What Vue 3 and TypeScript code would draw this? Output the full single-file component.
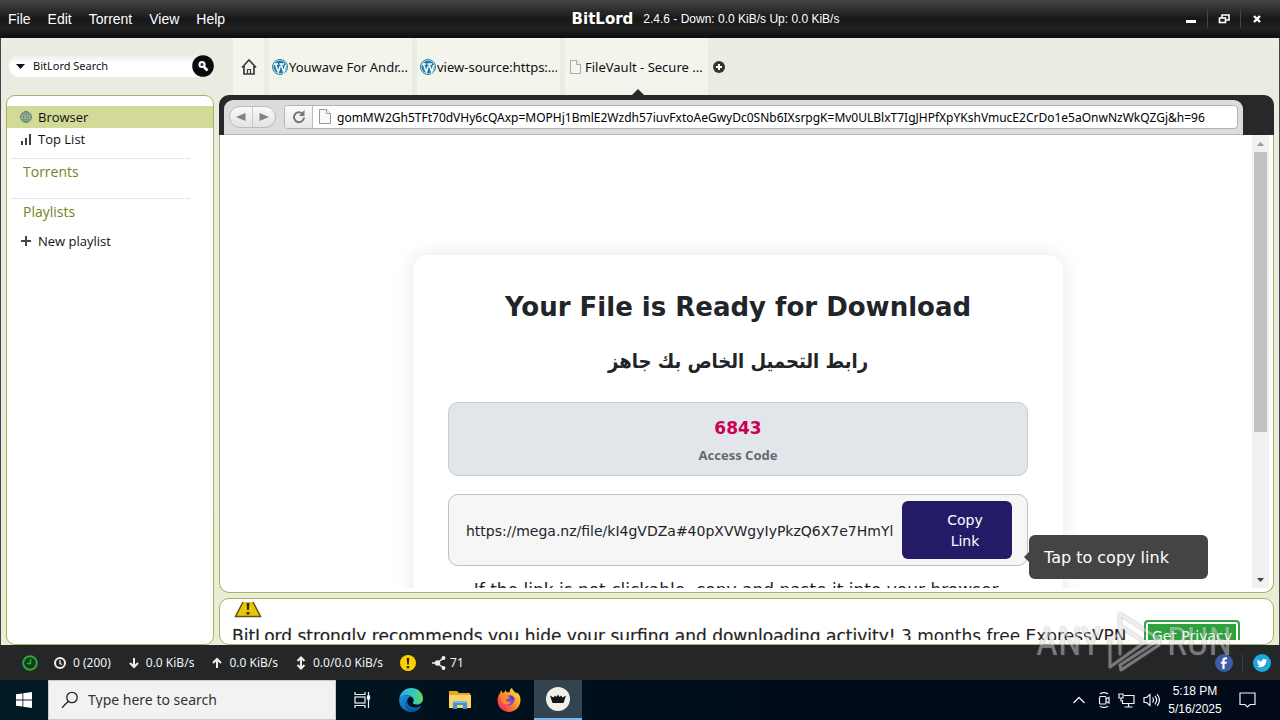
<script setup lang="ts">
import { ref } from 'vue'

interface Tab { title: string; icon: 'wp' | 'page'; active: boolean }

const menus = ['File', 'Edit', 'Torrent', 'View', 'Help']
const tabs: Tab[] = [
  { title: 'Youwave For Andr...', icon: 'wp', active: false },
  { title: 'view-source:https:...', icon: 'wp', active: false },
  { title: 'FileVault - Secure ...', icon: 'page', active: true },
]
const address = ref('gomMW2Gh5TFt70dVHy6cQAxp=MOPHj1BmlE2Wzdh57iuvFxtoAeGwyDc0SNb6IXsrpgK=Mv0ULBlxT7IgJHPfXpYKshVmucE2CrDo1e5aOnwNzWkQZGj&h=96')
const search = ref('')
const taskSearch = ref('')
</script>

<template>
  <div class="desktop">
    <header class="titlebar">
      <nav class="menus">
        <button v-for="m in menus" :key="m">{{ m }}</button>
      </nav>
      <div class="caption"><strong>BitLord</strong><span>2.4.6 - Down: 0.0 KiB/s Up: 0.0 KiB/s</span></div>
      <div class="win-buttons">
        <button aria-label="Minimize"><svg width="12" height="12" viewBox="0 0 12 12"><rect x="1" y="7" width="10" height="3" fill="#fff" /></svg></button>
        <button aria-label="Restore"><svg width="12" height="12" viewBox="0 0 12 12" fill="none" stroke="#fff" stroke-width="1.6"><path d="M4 5V2h7v5H8" /><rect x="1.5" y="5" width="6" height="4.5" /></svg></button>
        <button aria-label="Close"><svg width="12" height="12" viewBox="0 0 12 12"><path d="M3 3l6 6M9 3l-6 6" stroke="#fff" stroke-width="2.4" /></svg></button>
      </div>
    </header>

    <main class="workspace">
      <aside class="side">
        <form class="search" @submit.prevent>
          <svg class="caret" width="9" height="5" viewBox="0 0 9 5"><path d="M0 0h9L4.500 5z" fill="#111" /></svg>
          <input v-model="search" type="text" placeholder="BitLord Search" aria-label="BitLord Search" />
          <button aria-label="Search">
            <svg width="22" height="22" viewBox="0 0 22 22"><circle cx="11" cy="11" r="10.800" fill="#0a0a0a" /><circle cx="10" cy="9.500" r="2.600" fill="#333" stroke="#fff" stroke-width="2" /><path d="M12 12l3.500 3.500" stroke="#fff" stroke-width="2.600" /></svg>
          </button>
        </form>
        <nav class="side-panel">
          <a href="#" class="row selected">
            <svg width="12" height="12" viewBox="0 0 12 12" fill="#a9c3a0" stroke="#5d7a6c"><circle cx="6" cy="6" r="5.400" /><ellipse cx="6" cy="6" rx="2.500" ry="5.400" fill="none" stroke-width=".6" /><path d="M.6 6h10.800M1.500 3.300h9M1.500 8.700h9M6 .6v10.800" stroke-width=".6" /></svg>Browser</a>
          <a href="#" class="row">
            <svg width="12" height="12" viewBox="0 0 12 12" fill="#3c3c3c"><path d="M1 8h2v4H1zM5 5h2v7H5zM9 1h2v11H9z" /></svg>Top List</a>
          <h2>Torrents</h2>
          <h2>Playlists</h2>
          <a href="#" class="row">
            <svg width="12" height="12" viewBox="0 0 12 12"><path d="M1 6h10M6 1v10" stroke="#444" stroke-width="2" /></svg>New playlist</a>
        </nav>
      </aside>

      <section class="content">
        <div class="tabs">
          <button class="tab home" aria-label="Home">
            <svg width="16" height="18" viewBox="0 0 16 18" fill="none" stroke="#3c3c3c" stroke-width="1.700"><path d="M1 9.500L8 2l7 7.500M3 8v8h10V8" /><path d="M6.500 16v-4.500h3V16" stroke-width="1.200" /></svg>
          </button>
          <button v-for="t in tabs" :key="t.title" class="tab" :class="{ active: t.active }">
            <svg v-if="t.icon === 'wp'" width="16" height="16" viewBox="0 0 16 16"><circle cx="8" cy="8" r="7.500" fill="#fff" stroke="#1d7ba5" stroke-width="1" /><circle cx="8" cy="8" r="6.500" fill="#1d7ba5" /><path d="M2 5h4M7.500 5H12M3.300 5l3 8 2-6M9 5l2.700 8 2-7" fill="none" stroke="#fff" stroke-width="1.500" /></svg>
            <svg v-else width="13" height="16" viewBox="0 0 13 16" fill="#f5f5f2" stroke="#aaa"><path d="M1.500 1.500h6l4 4v9h-10z" /><path d="M7.500 1.500v4h4" /></svg>
            <span>{{ t.title }}</span>
          </button>
          <button class="add" aria-label="New tab">
            <svg width="12" height="12" viewBox="0 0 12 12"><circle cx="6" cy="6" r="6" fill="#333" /><path d="M3 6h6M6 3v6" stroke="#fff" stroke-width="2" /></svg>
          </button>
        </div>

        <div class="browser">
          <div class="browser-head">
            <div class="toolbar">
              <div class="history">
                <button aria-label="Back"><svg width="10" height="8" viewBox="0 0 10 8"><path d="M9.500 0v8L0 4z" fill="#828282" /></svg></button>
                <button aria-label="Forward"><svg width="10" height="8" viewBox="0 0 10 8"><path d="M.5 0v8L10 4z" fill="#828282" /></svg></button>
              </div>
              <div class="address">
                <button aria-label="Reload"><svg width="14" height="14" viewBox="0 0 14 14"><path d="M10.500 3.600A5 5 0 1 0 12 7.500" fill="none" stroke="#777" stroke-width="2" /><path d="M12.500 0v6H7z" fill="#777" /></svg></button>
                <svg class="page" width="12" height="16" viewBox="0 0 12 16" fill="#fafafa" stroke="#999"><path d="M.5.5h7l4 4v10H.5z" /><path d="M7.500.5v4h4" /></svg>
                <input v-model="address" type="text" aria-label="Address" />
              </div>
            </div>
          </div>
          <div class="viewport">
            <div class="page-body">
              <article class="card">
                <h1>Your File is Ready for Download</h1>
                <h2 dir="rtl" lang="ar">رابط التحميل الخاص بك جاهز</h2>
                <div class="code"><b>6843</b><span>Access Code</span></div>
                <div class="link-box">
                  <span class="url">https://mega.nz/file/kI4gVDZa#40pXVWgyIyPkzQ6X7e7HmYl</span>
                  <button>Copy<br />Link</button>
                  <div class="tip" role="tooltip">Tap to copy link</div>
                </div>
                <p>If the link is not clickable, copy and paste it into your browser.</p>
              </article>
            </div>
            <div class="scroll">
              <svg width="7" height="4" viewBox="0 0 7 4"><path d="M0 4h7L3.500 0z" fill="#999" /></svg>
              <i></i>
              <svg width="7" height="4" viewBox="0 0 7 4"><path d="M0 0h7L3.500 4z" fill="#444" /></svg>
            </div>
          </div>
        </div>

        <div class="promo">
          <div class="promo-clip">
            <svg width="28" height="16" viewBox="0 0 28 16"><path d="M9 0L1.500 14.500h25L19 0z" fill="#e8c80c" /><path d="M9 0L1.500 14.500h25L19 0" fill="none" stroke="#66530d" stroke-width="1.500" /><path d="M12.500 1h3l-.6 7h-1.800zM12.500 10h3v2.500h-3z" fill="#39300c" /></svg>
            <div class="promo-line">
              <p><b>BitLord strongly recommends you hide your surfing and downloading activity!</b> 3 months free ExpressVPN</p>
              <button>Get Privacy</button>
            </div>
          </div>
        </div>
      </section>
    </main>

    <footer class="status">
      <svg width="16" height="16" viewBox="0 0 16 16" fill="none" stroke="#2fa83c" stroke-width="2"><circle cx="8" cy="8" r="6.800" fill="#123c18" /><path d="M8.500 4v4.500H5" stroke-width="1.500" /></svg>
      <span class="stat s1"><svg width="12" height="12" viewBox="0 0 12 12" fill="none" stroke="#eee" stroke-width="2"><circle cx="6" cy="6" r="5" /><path d="M6 3v3.500l2 1" stroke-width="1.300" /></svg>0 (200)</span>
      <span class="stat"><svg width="10" height="12" viewBox="0 0 10 12" fill="none" stroke="#eee" stroke-width="2"><path d="M5 1v9M1 6l4 4 4-4" /></svg>0.0 KiB/s</span>
      <span class="stat"><svg width="10" height="12" viewBox="0 0 10 12" fill="none" stroke="#eee" stroke-width="2"><path d="M5 11V2M1 6l4-4 4 4" /></svg>0.0 KiB/s</span>
      <span class="stat"><svg width="10" height="14" viewBox="0 0 10 14" fill="none" stroke="#eee" stroke-width="2"><path d="M5 2v10M1.500 5L5 1.500 8.500 5M1.500 9L5 12.500 8.500 9" /></svg>0.0/0.0 KiB/s</span>
      <svg class="warn" width="16" height="16" viewBox="0 0 16 16"><circle cx="8" cy="8" r="8" fill="#fad000" /><path d="M6.800 3h2.400l-.4 6.500H7.200zM6.800 11h2.400v2.300H6.800z" fill="#222" /></svg>
      <span class="stat s5"><svg width="15" height="14" viewBox="0 0 15 14" stroke="#eee" fill="#eee" stroke-width="1.500"><path d="M1 7h5l6-4.500M6 7l6 4.500" fill="none" /><circle cx="12.500" cy="2" r="1.200" /><circle cx="12.500" cy="12" r="1.200" /><circle cx="6.500" cy="7" r="2" /></svg>71</span>
      <div class="social">
        <a href="#" aria-label="Facebook"><svg width="18" height="18" viewBox="0 0 18 18"><circle cx="9" cy="9" r="9" fill="#3f5ca8" /><path d="M9.600 15V9.800h2l.3-2.100H9.600V6.500c0-.7.300-1.100 1.100-1.100h1.200V3.300c-2.800-.4-4.500.4-4.500 2.900v1.500H5.800v2.100h1.600V15z" fill="#fff" /></svg></a>
        <a href="#" aria-label="Twitter"><svg width="18" height="18" viewBox="0 0 18 18"><circle cx="9" cy="9" r="9" fill="#1ba8de" /><path d="M4.600 5.400c1.100 1.300 2.500 2 4.200 2.100-.2-2.500 2.300-3.300 3.700-1.900l1.400-.5-.8 1.200 1.100-.2-1.100 1.200c.1 5.200-5.200 7.300-9 4.900 1.100.1 2-.2 2.700-.8-1 0-1.600-.6-1.900-1.400h.9c-1-.4-1.500-1.100-1.500-2.100l.8.2c-.9-.7-1-1.700-.5-2.700z" fill="#fff" /></svg></a>
      </div>
    </footer>

    <footer class="taskbar">
      <button class="start" aria-label="Start"><svg width="16" height="16" viewBox="0 0 16 16" fill="#fff"><path d="M0 2.300L6.500 1.400v6.200H0zM7.300 1.300L16 0v7.600H7.300zM0 8.400h6.500v6.200L0 13.700zM7.300 8.400H16V16l-8.700-1.300z" /></svg></button>
      <label class="task-search">
        <svg width="18" height="18" viewBox="0 0 18 18" fill="none" stroke="#222" stroke-width="1.300"><circle cx="11" cy="6.500" r="5.200" /><path d="M7.300 10.300L1 16.800" /></svg>
        <input v-model="taskSearch" type="text" placeholder="Type here to search" aria-label="Type here to search" />
      </label>
      <div class="apps">
        <button aria-label="Task View"><svg width="17" height="16" viewBox="0 0 17 16" fill="none" stroke="#f2f2f2" stroke-width="1.200"><path d="M1 0v2.500h10V0M1 16v-2.500h10V16M14.500 0v16" /><rect x="1" y="5" width="10" height="6" /><rect x="13.500" y="4" width="2" height="3" fill="#fff" /></svg></button>
        <button aria-label="Edge">
          <svg width="24" height="24" viewBox="0 0 24 24">
            <defs>
              <linearGradient id="eg1" x1="0" x2="1"><stop offset="0" stop-color="#2aa9e8" /><stop offset=".6" stop-color="#36c9c0" /><stop offset="1" stop-color="#62d957" /></linearGradient>
              <linearGradient id="eg2" x1="0" y1="0" x2="1" y2="1"><stop offset="0" stop-color="#1b8fe0" /><stop offset="1" stop-color="#0c59a4" /></linearGradient>
            </defs>
            <path d="M.2 11C1 4.500 6 0 12 0c7 0 12 5 12 10.500 0 4-3 6-6 6-3 0-4.500-1-4-2 1.200-1.500 1-3.500-.5-5C10 6 3 6.500.2 11z" fill="url(#eg1)" />
            <path d="M.1 11.500C2 7.500 8 6 12 8.600c-3 .5-4.500 3.400-3.600 6.400 1.100 3.500 5.600 5.500 10.600 4.200 1.200-.3 2.800-1.500 3.200-1C19.500 22.500 16 24 12 24 5 24-.4 18 .1 11.500z" fill="url(#eg2)" />
            <path d="M8.400 12c-1.500 4.500 1.500 8.500 6.600 9.300 2 .2 4.500-.5 6-1.900-2.300 3-5.500 4.600-9 4.600-5-1-8-8-3.600-12z" fill="#123f89" opacity=".55" />
          </svg>
        </button>
        <button aria-label="File Explorer"><svg width="22" height="18" viewBox="0 0 22 18"><path d="M0 0h8l2 2h11v4H0z" fill="#e8a723" /><path d="M0 4h22v13H0z" fill="#fcd462" /><path d="M4 18v-8h14v8h-4v-4H8v4z" fill="#3f93d6" /><path d="M4 10h14v2H4z" fill="#72b9ea" /></svg></button>
        <button aria-label="Firefox">
          <svg width="24" height="24" viewBox="0 0 24 24">
            <defs><linearGradient id="ff1" x1="1" y1="0" x2="0" y2="1"><stop offset="0" stop-color="#fff04a" /><stop offset=".45" stop-color="#ff9526" /><stop offset=".8" stop-color="#f93a55" /><stop offset="1" stop-color="#e31587" /></linearGradient></defs>
            <path d="M3 5c.4-1 .9-2 1.800-2.800L5.400 5l2-.8L8.600 2l1.400 2.500c1.500 0 2-.3 3-1C12.700 2 13.500.5 15 0c.7 3 3 3.500 4.500 5.500l.5-1.200C22.500 6.500 23.600 9 23.500 12.500 23.300 19 18 24 12 24S.5 19 .5 12.500C.5 9.500 1.500 7 3 5z" fill="url(#ff1)" />
            <circle cx="12" cy="12.500" r="5" fill="#7549d8" /><path d="M4 7.500c2-1.500 5-.5 6 .5 1 1 2.500 0 3 1.500-1 1.500-3.500 1-4 2.800 1 2.200 3.800 2 5.500 1-1 4-8 4.500-10-.3z" fill="#ff8b24" /><path d="M12 7.500c3-.5 6 1.500 6 5.500-1-2-2.500-2-4-2.500z" fill="#5b36b0" />
          </svg>
        </button>
        <button class="current" aria-label="BitLord"><svg width="24" height="24" viewBox="0 0 24 24"><circle cx="12" cy="12" r="12" fill="#f0f0e8" /><path d="M4 8.500l3.500 2 1.500-2 1.500 1.500L12 7.500l1.500 2.500L15 8.500l1.500 2 3.500-2-2.500 7.500h-11z" fill="#151515" /></svg></button>
      </div>
      <div class="tray">
        <svg width="12" height="8" viewBox="0 0 12 8" fill="none" stroke="#f2f2f2" stroke-width="1.300"><path d="M.5 7L6 1.500 11.500 7" /></svg>
        <svg width="12" height="16" viewBox="0 0 12 16" fill="none" stroke="#f2f2f2" stroke-width="1.200"><rect x="1.500" y="4.500" width="6.500" height="7.500" rx="1" /><path d="M8 7l3-1.500v5.500L8 9.500M2 2C4.500.3 7.500.3 10 2M2 14.200c2.500 1.600 5.500 1.600 8 0" /></svg>
        <svg width="17" height="15" viewBox="0 0 17 15" fill="none" stroke="#f2f2f2" stroke-width="1.200"><path d="M6 2.500h10v8H4.500V7M10.500 10.500V14M6.500 14h8M1 1h4v4H1zM3 5v3.500" /></svg>
        <svg width="17" height="14" viewBox="0 0 17 14" fill="none" stroke="#f2f2f2" stroke-width="1.200"><path d="M1 4.500h2.500L7 1.500v11L3.500 9.500H1zM9.500 4.500c1.200 1.500 1.200 3.500 0 5M11.800 2.800c2.200 2.500 2.200 6 0 8.500M14 1.200c3 3.500 3 8 0 11.600" /></svg>
        <time><span>5:18 PM</span><span>5/16/2025</span></time>
        <svg width="17" height="16" viewBox="0 0 17 16" fill="none" stroke="#f2f2f2" stroke-width="1.200"><path d="M1 1h15v11.500h-5L8.500 15 6 12.500H1z" /></svg>
      </div>
    </footer>

    <div class="watermark">
      <span>ANY</span>
      <svg width="54" height="64" viewBox="0 0 54 64" fill="none" stroke="#ddd" stroke-width="3" stroke-linejoin="round" stroke-linecap="round"><path d="M13 24V4l39 25v6L14 60l-1-5 37-24M13 24L3 29v28l35-25L13 16M13 24v20" /></svg>
      <span>RUN</span>
    </div>
  </div>
</template>

<style>
html, body { margin: 0; overflow: hidden; background: #222428; }
</style>

<style scoped>
* { box-sizing: border-box; }
button { border: 0; padding: 0; margin: 0; background: none; color: inherit; font: inherit; }
input { border: 0; padding: 0; margin: 0; background: none; color: inherit; font: inherit; min-width: 0; outline: 0; }
a { color: inherit; text-decoration: none; }
svg { flex: none; display: block; }
h1, h2, p { margin: 0; }
.desktop { position: relative; display: flex; flex-direction: column; height: 100vh; font: 12px/16px "Noto Sans", "Open Sans", sans-serif; color: #111; }

.titlebar { display: grid; grid-template-columns: 1fr auto 1fr; align-items: center; height: 38px; background: linear-gradient(#464646, #171717 50%, #222 75%, #0c0c0c); color: #fff; font-family: "Liberation Sans", Arial, sans-serif; }
.menus { display: flex; gap: 17px; padding-left: 8px; font-size: 14px; }
.caption { display: flex; align-items: center; gap: 10px; padding-left: 131px; font-size: 12px; }
.caption strong { font: bold 15px/20px "DejaVu Sans", sans-serif; }
.win-buttons { display: flex; justify-content: flex-end; padding-right: 7px; }
.win-buttons button { width: 33px; height: 18px; display: grid; place-items: center; }
.win-buttons button + button { border-left: 1px solid #444; }

.workspace { flex: 1; min-height: 0; display: grid; grid-template-columns: 208px minmax(0, 1fr); gap: 5px; padding: 0 5px; border: solid #44444a; border-width: 0 1px; background: linear-gradient(#ebece2, #e9edd3); }
.side, .content { display: flex; flex-direction: column; min-height: 0; min-width: 0; }
.search { display: flex; align-items: center; height: 22px; margin: 17px 0 18px 3px; padding-left: 7px; border-radius: 11px; background: linear-gradient(#eee, #fff 40%); }
.search input { flex: 1; margin-left: 8px; font-size: 11px; }
.search input::placeholder { color: #111; opacity: 1; }
.side-panel { flex: 1; border: 1px solid #a6b168; border-radius: 9px; background: #fff; padding-top: 10px; overflow: hidden; font: 13px/16px "Open Sans", "Noto Sans", sans-serif; }
.row { display: flex; align-items: center; gap: 6px; height: 22px; padding-left: 13px; }
.selected { background: #d3da98; }
.side-panel h2 { margin: 8px 23px 0 4px; padding: 3px 0 9px 12px; border-top: 1px dotted #ccc; font-weight: 400; font-size: 14px; line-height: 19px; color: #758420; }

.tabs { display: flex; gap: 5px; height: 57px; padding-left: 14px; font-size: 13px; }
.tab { position: relative; flex: 0 1 143px; min-width: 0; display: flex; align-items: center; gap: 1px; padding: 0 3px; background: #f3f4ec; white-space: nowrap; }
.tab span { overflow: hidden; }
.home { flex: 0 0 31px; justify-content: center; }
.active { gap: 3px; padding-left: 4px; }
.active::after { content: ""; position: absolute; left: 67px; bottom: 0; border: 6px solid transparent; border-top: 0; border-bottom-color: #26282a; }

.browser { flex: 1; min-height: 0; display: flex; flex-direction: column; border-radius: 10px; border: 1px solid #a6b168; border-top: 0; background: #fff; }
.browser-head { margin: 0 -1px; height: 40px; padding: 5px 31px 0 5px; background: #26282a; border-radius: 10px 10px 0 0; }
.toolbar { display: flex; align-items: center; gap: 8px; height: 35px; padding: 0 5px; background: #dcdcdc; border-bottom: 1px solid #b8b8b8; border-radius: 9px 9px 0 0; }
.history { display: flex; height: 22px; width: 47px; border: 1px solid #bcbcbc; border-radius: 11px; background: linear-gradient(#fafafa, #e2e2e2); }
.history button { flex: 1; display: grid; place-items: center; }
.history button + button { border-left: 1px solid #ccc; }
.address { flex: 1; min-width: 0; display: flex; align-items: center; height: 24px; border: 1px solid #b4b4b4; border-radius: 4px; background: #fff; overflow: hidden; }
.address button { width: 28px; height: 22px; display: grid; place-items: center; border-right: 1px solid #bbb; background: linear-gradient(#fafafa, #e8e8e8); }
.page { margin: 0 6px; }
.address input { flex: 1; height: 22px; font-size: 12px; color: #000; }
.viewport { flex: 1; min-height: 0; display: flex; margin: 0 4px 4px; overflow: hidden; }
.page-body { flex: 1; padding-top: 120px; font-family: "DejaVu Sans", Verdana, sans-serif; color: #212529; }
.card { width: 650px; max-width: 100%; margin: 0 auto; padding: 35px; border-radius: 15px; box-shadow: 0 0 20px rgba(0, 0, 0, .1); text-align: center; background: #fff; }
.card h1 { font-size: 26px; line-height: 34px; }
.card h2 { margin: 20px 0 24px; font: bold 20px/34px "DejaVu Sans Condensed", "DejaVu Sans", sans-serif; }
.code { display: flex; flex-direction: column; padding: 14px 14px 12px; border: 1px solid #c8ccd0; border-radius: 10px; background: #e2e6ea; }
.code b { font-size: 17px; line-height: 22px; color: #cc0052; }
.code span { margin-top: 8px; font: bold 13px/16px "Noto Sans", sans-serif; color: #666a6e; }
.link-box { position: relative; display: flex; align-items: center; margin-top: 18px; padding: 6px 15px 6px 17px; border: 1px solid #c0c0c0; border-radius: 10px; background: #f6f6f6; font-size: 14px; line-height: 21px; }
.url { flex: 1; min-width: 0; padding-top: 2px; overflow: hidden; white-space: nowrap; text-align: left; }
.link-box button { width: 110px; height: 58px; padding: 2px 0 0 16px; border-radius: 6px; background: #241b66; color: #fff; }
.tip { position: absolute; left: 580px; top: 40px; width: 179px; padding: 12px 15px 10px; border-radius: 6px; background: #444; color: #fff; font-size: 16px; line-height: 22px; text-align: left; white-space: nowrap; }
.tip::before { content: ""; position: absolute; left: -5px; top: 17px; border: 5px solid transparent; border-left: 0; border-right-color: #444; }
.card p { margin-top: 12px; font-size: 17px; line-height: 24px; white-space: nowrap; }
.scroll { width: 17px; display: flex; flex-direction: column; align-items: center; padding: 7px 0 6px; background: #f1f1f1; }
.scroll i { width: 13px; height: 280px; margin: 6px 0 auto; background: #c1c1c1; }

.promo { height: 47px; margin-top: 5px; padding: 3px 12px 4px; border: 1px solid #a6b168; border-radius: 10px; background: #fff; }
.promo-clip { height: 100%; overflow: hidden; }
.promo-clip > svg { margin-left: 2px; }
.promo-line { display: flex; justify-content: space-between; align-items: flex-start; padding: 2px 21px 0 0; font: 17px/24px "DejaVu Sans", sans-serif; color: #222; white-space: nowrap; }
.promo p { padding-top: 4px; }
.promo b { font-weight: 400; -webkit-text-stroke: 1px rgba(34, 34, 34, .2); }
.promo-line button { height: 32px; padding: 0 6px; border: 2px solid #35a447; border-radius: 4px; background: #2da23d; box-shadow: inset 0 0 0 2px #fff; color: #fff; font-size: 14px; }

.status { display: flex; align-items: center; height: 35px; padding: 0 9px 0 22px; color: #f2f2f2; background: repeating-conic-gradient(#1e2022 0 25%, #2a2c2e 0 50%) 0 0 / 2px 2px; }
.stat { display: flex; align-items: center; gap: 7px; margin-left: 18px; white-space: nowrap; }
.s1 { margin-left: 16px; }
.warn { margin-left: 17px; }
.s5 { margin-left: 15px; gap: 4px; }
.social { display: flex; margin-left: auto; }
.social a + a { margin-left: 9px; padding-left: 10px; border-left: 1px solid #3a3c3e; }

.taskbar { display: flex; height: 40px; background: linear-gradient(90deg, #001a24, #000c1a 60%, #020a1a); color: #fff; }
.taskbar button { flex: none; width: 48px; height: 40px; display: grid; place-items: center; }
.task-search { display: flex; align-items: center; gap: 9px; flex: 0 1 288px; padding-left: 12px; background: #f2f2f2; border: 1px solid #ccc; }
.task-search input { flex: 1; font-size: 14px; }
.task-search input::placeholder { color: #333; opacity: 1; }
.apps { display: flex; gap: 1px; padding-left: 2px; }
.taskbar .current { background: #33434f; border-bottom: 2px solid #76b9ed; }
.tray { display: flex; align-items: center; margin-left: auto; padding-right: 24px; }
.tray > svg + svg { margin-left: 13px; }
.tray > svg:nth-child(3), .tray > svg:nth-child(4) { margin-left: 8px; }
time { display: flex; flex-direction: column; align-items: center; width: 52px; margin: 0 18px 0 9px; font: 12px/18px "Liberation Sans", sans-serif; white-space: nowrap; }

.watermark { position: absolute; right: 48px; bottom: 46px; display: flex; align-items: center; gap: 6px; opacity: .45; pointer-events: none; font: 38px/50px "Liberation Sans Narrow", "Roboto Condensed", "Open Sans Condensed", "Liberation Sans", sans-serif; color: #ddd; filter: drop-shadow(0 0 1px #555); }
</style>
